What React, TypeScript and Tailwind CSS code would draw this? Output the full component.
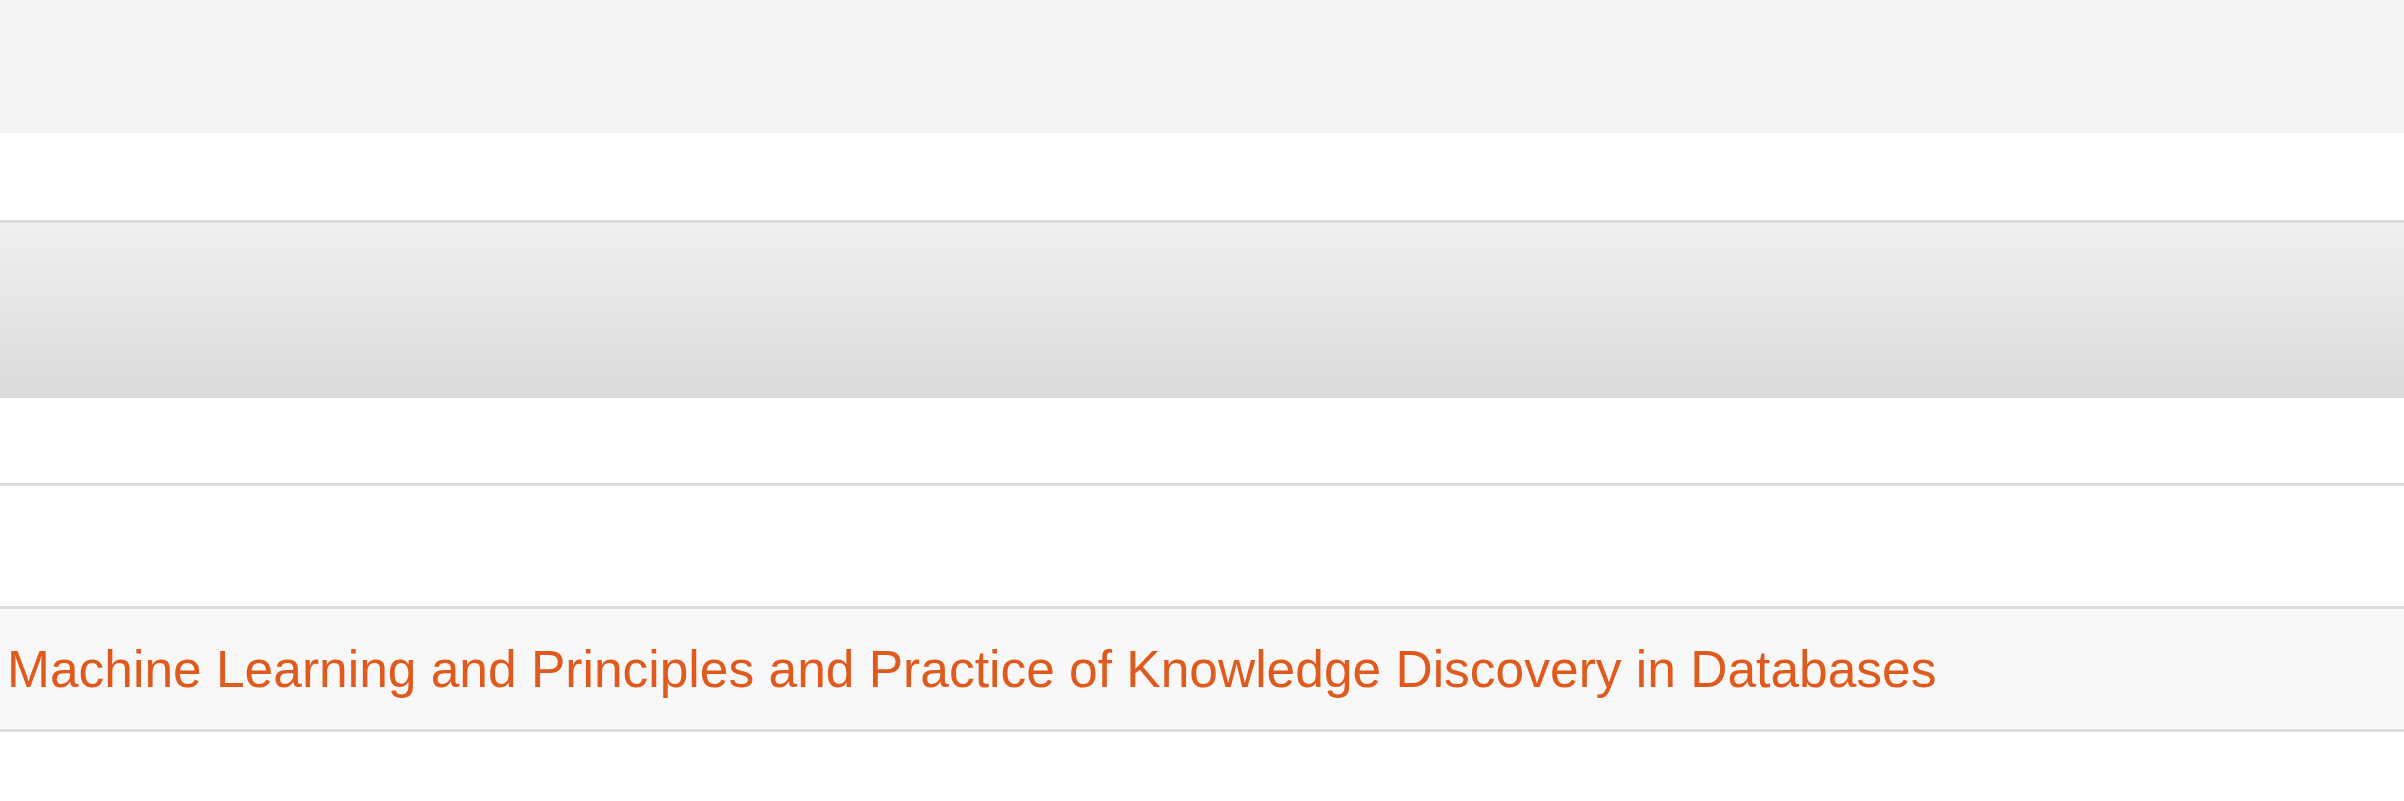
export default function App() {
  return (
    <div className="w-full min-h-[801px] bg-white" style={{ fontFamily: '"Liberation Sans", Arial, sans-serif' }}>
      <div className="h-[133px] bg-[#f4f4f4]" />
      <div className="h-[87px] bg-white" />
      <div className="h-[178px] border-t-[3px] border-[#dcdcdc] bg-gradient-to-b from-[#f0f0f0] to-[#dadada]" />
      <div className="h-[85px] bg-white" />
      <div className="border-t-[3px] border-[#dcdcdc] h-[123px] bg-[#fdfdfd]" />
      <div className="border-y-[3px] border-[#dcdcdc] h-[126px] bg-[#f8f8f8] pl-[7px] flex items-center">
        <span className="block text-[51.5px] leading-[58px] text-[#e05a1e] whitespace-nowrap">
          Machine Learning and Principles and Practice of Knowledge Discovery in Databases
        </span>
      </div>
    </div>
  );
}
